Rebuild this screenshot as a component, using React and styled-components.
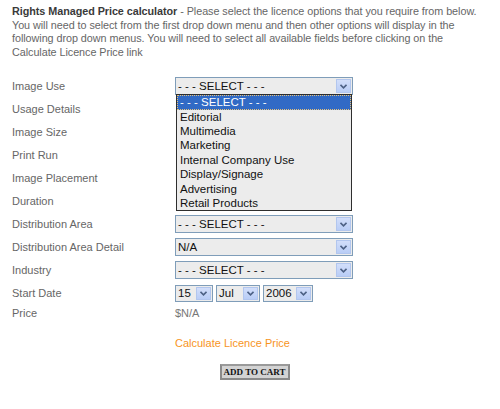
import styled, { createGlobalStyle } from "styled-components";

const GlobalStyle = createGlobalStyle`
  body {
    margin: 0;
    background: #ffffff;
    font-family: "Liberation Sans", Arial, sans-serif;
  }
`;

const Page = styled.div`
  width: 485px;
  padding: 5px 3px 20px 12px;
`;

const Intro = styled.p`
  margin: 0 0 15px;
  font-size: 10.8px;
  letter-spacing: -0.05px;
  line-height: 13.7px;
  white-space: nowrap;
  color: #666666;
`;

const Strong = styled.b`
  color: #3a3a3a;
`;

const Form = styled.div`
  display: grid;
  grid-template-columns: 163px 1fr;
  grid-template-rows: repeat(10, 23px) 17px;
  align-items: center;
`;

const Label = styled.div`
  font-size: 11px;
  color: #666666;
`;

const Control = styled.div`
  position: relative;
  display: flex;
  align-items: center;
  gap: 3px;
`;

const Box = styled.div`
  position: relative;
  box-sizing: border-box;
  width: ${(p) => p.$width}px;
  height: ${(p) => p.$height}px;
  display: flex;
  align-items: center;
  border: 1px solid #7f9db9;
  background: #ececec;
`;

const Value = styled.span`
  flex: 1;
  padding-left: 2px;
  font-size: 11.5px;
  color: #111111;
  white-space: nowrap;
`;

const Arrow = styled.span`
  box-sizing: border-box;
  width: 15px;
  height: ${(p) => p.$height - 4}px;
  margin-right: 1px;
  display: flex;
  align-items: center;
  justify-content: center;
  background: linear-gradient(#d2defa, #b9cdf6);
  border: 1px solid #b2c6ee;
`;

const List = styled.ul`
  position: absolute;
  top: 100%;
  left: 0;
  z-index: 2;
  box-sizing: border-box;
  width: 100%;
  margin: 0;
  padding: 0;
  list-style: none;
  border: 1px solid #2e2e2e;
  background: #ececec;
`;

const Item = styled.li`
  height: 14.4px;
  line-height: 14px;
  padding-left: 3px;
  font-size: 11.5px;
  color: ${(p) => (p.$active ? "#ffffff" : "#111111")};
  background: ${(p) => (p.$active ? "#316ac5" : "transparent")};
  outline: ${(p) => (p.$active ? "1px dotted #e6c27a" : "none")};
  outline-offset: -1px;
`;

const Price = styled.span`
  font-size: 11px;
  color: #777777;
`;

const Calculate = styled.a`
  display: block;
  margin: 15px 0 0 163px;
  font-size: 11px;
  color: #f7941d;
  text-decoration: none;
`;

const Actions = styled.div`
  display: flex;
  justify-content: center;
  margin-top: 15px;
`;

const Cart = styled.button`
  box-sizing: border-box;
  width: 70px;
  height: 16px;
  padding: 0;
  border: 2px solid #8a8a8a;
  border-top-color: #9a9a9a;
  background: #d3d3d3;
  font-family: "Liberation Serif", "Times New Roman", serif;
  font-size: 9px;
  font-weight: bold;
  color: #111111;
`;

const Chevron = () => (
  <svg width="7" height="5" viewBox="0 0 7 5">
    <path d="M0.5 0.8 L3.5 3.8 L6.5 0.8" fill="none" stroke="#4d6185" strokeWidth="1.6" />
  </svg>
);

const Select = ({ value, width = 178, height = 18, children }) => (
  <Box $width={width} $height={height}>
    <Value>{value}</Value>
    <Arrow $height={height}>
      <Chevron />
    </Arrow>
    {children}
  </Box>
);

const uses = [
  "- - - SELECT - - -",
  "Editorial",
  "Multimedia",
  "Marketing",
  "Internal Company Use",
  "Display/Signage",
  "Advertising",
  "Retail Products",
];

const App = () => {
  return (
    <Page>
      <GlobalStyle />
      <Intro>
        <Strong>Rights Managed Price calculator</Strong> - Please select the licence options that you
        require from below.
        <br />
        You will need to select from the first drop down menu and then other options will display in
        the
        <br />
        following drop down menus. You will need to select all available fields before clicking on
        the
        <br />
        Calculate Licence Price link
      </Intro>
      <Form>
        <Label>Image Use</Label>
        <Control>
          <Select value="- - - SELECT - - -">
            <List>
              {uses.map((u, i) => (
                <Item key={u} $active={i === 0}>
                  {u}
                </Item>
              ))}
            </List>
          </Select>
        </Control>
        <Label>Usage Details</Label>
        <Control />
        <Label>Image Size</Label>
        <Control />
        <Label>Print Run</Label>
        <Control />
        <Label>Image Placement</Label>
        <Control />
        <Label>Duration</Label>
        <Control />
        <Label>Distribution Area</Label>
        <Control>
          <Select value="- - - SELECT - - -" />
        </Control>
        <Label>Distribution Area Detail</Label>
        <Control>
          <Select value="N/A" />
        </Control>
        <Label>Industry</Label>
        <Control>
          <Select value="- - - SELECT - - -" />
        </Control>
        <Label>Start Date</Label>
        <Control>
          <Select value="15" width={38} height={17} />
          <Select value="Jul" width={44} height={17} />
          <Select value="2006" width={50} height={17} />
        </Control>
        <Label>Price</Label>
        <Control>
          <Price>$N/A</Price>
        </Control>
      </Form>
      <Calculate href="#">Calculate Licence Price</Calculate>
      <Actions>
        <Cart>ADD TO CART</Cart>
      </Actions>
    </Page>
  );
};

export default App;
